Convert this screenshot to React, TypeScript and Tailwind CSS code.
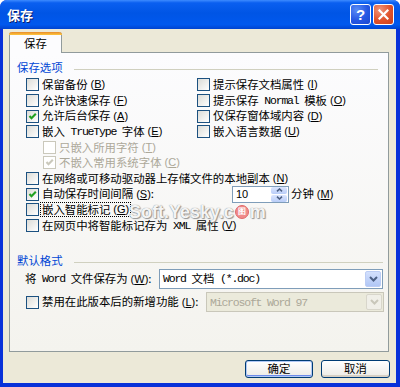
import React from 'react';

// Latin run inside SimSun-style text: narrow monospace
function Lt({ children }: { children: React.ReactNode }) {
  return (
    <span className="font-['Liberation_Mono',monospace] text-[11.5px] tracking-[-1.2px] whitespace-pre">
      {children}
    </span>
  );
}

// Mnemonic key, e.g. (B)
function K({ k }: { k: string }) {
  return (
    <span className="font-['Liberation_Sans',sans-serif] text-[11px] ml-[3px]">
      (<span className="underline underline-offset-1">{k}</span>)
    </span>
  );
}

function Box({ checked, disabled }: { checked?: boolean; disabled?: boolean }) {
  return (
    <span
      className={
        disabled
          ? 'w-[13px] h-[13px] shrink-0 border border-[#cac8bb] bg-white flex items-center justify-center'
          : 'w-[13px] h-[13px] shrink-0 border border-[#1c5180] bg-linear-to-br from-[#dcdcd7] to-white flex items-center justify-center'
      }
    >
      {checked && (
        <svg width="9" height="9" viewBox="0 0 9 9">
          <path d="M1.5 4 L3.5 6.2 L7.8 1.8" stroke={disabled ? '#cac8bb' : '#21a121'} strokeWidth="2.1" fill="none" />
        </svg>
      )}
    </span>
  );
}

function Row({
  children,
  checked,
  disabled,
  indent,
}: {
  children: React.ReactNode;
  checked?: boolean;
  disabled?: boolean;
  indent?: boolean;
}) {
  return (
    <div className={indent ? 'h-[15.6px] flex items-center gap-[3px] pl-[17px]' : 'h-[15.6px] flex items-center gap-[3px]'}>
      <Box checked={checked} disabled={disabled} />
      <span className={disabled ? 'flex items-center leading-none whitespace-nowrap text-[#aca899]' : 'flex items-center leading-none whitespace-nowrap'}>
        {children}
      </span>
    </div>
  );
}

function Header({ label, lineRight }: { label: string; lineRight: string }) {
  return (
    <div className="h-[14px] flex items-center">
      <span className="text-[#0046d5] leading-none whitespace-nowrap">{label}</span>
      <div className={`flex-1 h-px bg-[#d0d0bf] ml-[11px] mt-[3px] ${lineRight}`} />
    </div>
  );
}

function Chevron({ color }: { color: string }) {
  return (
    <svg width="9" height="6" viewBox="0 0 9 6">
      <path d="M1 1 L4.5 4.5 L8 1" stroke={color} strokeWidth="2" fill="none" />
    </svg>
  );
}

export default function App() {
  return (
    <div className="w-[400px] h-[387px] bg-white relative font-['Noto_Sans_CJK_SC',sans-serif] text-[11.4px] text-black">
      <div className="w-full h-full flex flex-col bg-[#0831d9] rounded-t-[7px] overflow-hidden">
        {/* Title bar */}
        <div className="h-[29px] shrink-0 flex items-center justify-between pl-[7px] pr-[6px] bg-[linear-gradient(180deg,#3d8bff_0%,#0a5ff0_10%,#0055e5_45%,#0058ee_85%,#0043cf_100%)]">
          <span className="text-white font-bold text-[13px] leading-none [text-shadow:1px_1px_0_#0a1e6a]">保存</span>
          <div className="flex gap-[2px]">
            <div className="w-[21px] h-[21px] rounded-[3px] border border-white bg-[radial-gradient(circle_at_30%_25%,#5a8cf5,#2557e3_55%,#1a47d0)] flex items-center justify-center">
              <span className="text-white font-bold text-[15px] leading-none font-['Liberation_Sans',sans-serif]">?</span>
            </div>
            <div className="w-[21px] h-[21px] rounded-[3px] border border-white bg-[radial-gradient(circle_at_30%_25%,#f0957a,#e0522b_55%,#c8401e)] flex items-center justify-center">
              <svg width="11" height="11" viewBox="0 0 11 11">
                <path d="M1.5 1.5 L9.5 9.5 M9.5 1.5 L1.5 9.5" stroke="white" strokeWidth="2.2" strokeLinecap="square" />
              </svg>
            </div>
          </div>
        </div>

        {/* Body */}
        <div className="flex-1 ml-[3px] mr-[4px] mb-[4px] bg-[#ece9d8] flex flex-col pl-[6px] pr-[7px] pt-[3px]">
          {/* Tab strip */}
          <div className="flex h-[20px]">
            <div className="relative z-10 w-[53px] h-[21px] bg-[#fcfcfe] border-x border-[#919b9c] rounded-t-[3px] flex items-center justify-center pt-[2px]">
              <div className="absolute left-[-1px] right-[-1px] top-0 h-[3px] rounded-t-[3px] bg-linear-to-b from-[#e68b2c] to-[#ffc73c]" />
              <span className="leading-none">保存</span>
            </div>
          </div>

          {/* Panel */}
          <div className="h-[300px] shrink-0 border border-[#919b9c] bg-linear-to-b from-[#fcfcfe] to-[#f4f3ee] flex flex-col pl-[7px] pt-[8px]">
            <Header label="保存选项" lineRight="mr-[10px]" />

            <div className="mt-[2.2px] ml-[9px] flex flex-col">
              <div className="flex">
                <div className="w-[171px] flex flex-col">
                  <Row>保留备份<K k="B" /></Row>
                  <Row>允许快速保存<K k="F" /></Row>
                  <Row checked>允许后台保存<K k="A" /></Row>
                  <Row>嵌入<Lt> TrueType </Lt>字体<K k="E" /></Row>
                  <Row indent disabled>只嵌入所用字符<K k="T" /></Row>
                  <Row indent disabled checked>不嵌入常用系统字体<K k="C" /></Row>
                </div>
                <div className="flex flex-col">
                  <Row>提示保存文档属性<K k="I" /></Row>
                  <Row>提示保存<Lt> Normal </Lt>模板<K k="O" /></Row>
                  <Row>仅保存窗体域内容<K k="D" /></Row>
                  <Row>嵌入语言数据<K k="U" /></Row>
                </div>
              </div>
              <Row>在网络或可移动驱动器上存储文件的本地副本<K k="N" /></Row>
              <div className="h-[15.6px] flex items-center gap-[3px]">
                <Box checked />
                <span className="w-[187px] flex items-center leading-none whitespace-nowrap">
                  自动保存时间间隔<K k="S" />:
                </span>
                <div className="w-[57px] h-[17px] shrink-0 border border-[#7f9db9] bg-white flex items-center justify-between pl-[3px] pr-px">
                  <span className="font-['Liberation_Sans',sans-serif] text-[11px] leading-none">10</span>
                  <div className="w-[16px] h-[15px] flex flex-col gap-px">
                    <div className="flex-1 rounded-[2px] bg-linear-to-b from-[#dbe5fd] to-[#b9cdf8] flex items-center justify-center">
                      <svg width="7" height="4" viewBox="0 0 7 4"><path d="M1 3.3 L3.5 1 L6 3.3" stroke="#4d6185" strokeWidth="1.6" fill="none" /></svg>
                    </div>
                    <div className="flex-1 rounded-[2px] bg-linear-to-b from-[#dbe5fd] to-[#b9cdf8] flex items-center justify-center">
                      <svg width="7" height="4" viewBox="0 0 7 4"><path d="M1 0.7 L3.5 3 L6 0.7" stroke="#4d6185" strokeWidth="1.6" fill="none" /></svg>
                    </div>
                  </div>
                </div>
                <span className="ml-[-1px] flex items-center leading-none whitespace-nowrap">
                  分钟<K k="M" />
                </span>
              </div>
              <div className="h-[15.6px] flex items-center gap-[2px]">
                <Box />
                <span className="flex items-center leading-none whitespace-nowrap outline-1 outline-dotted outline-black px-px py-[1px]">
                  嵌入智能标记<K k="G" />
                </span>
              </div>
              <Row>在网页中将智能标记存为<Lt> XML </Lt>属性<K k="V" /></Row>
            </div>

            <div className="mt-[21px]">
              <Header label="默认格式" lineRight="mr-[5px]" />
            </div>

            <div className="mt-px flex items-center h-[20px]">
              <span className="w-[134px] ml-[8px] flex items-center leading-none whitespace-nowrap">
                将<Lt> Word </Lt>文件保存为<K k="W" />:
              </span>
              <div className="w-[224px] h-[20px] border border-[#7f9db9] bg-white flex items-center justify-between pl-[3px] pr-px">
                <span className="flex items-center leading-none whitespace-nowrap">
                  <Lt>Word </Lt>文档<Lt> (*.doc)</Lt>
                </span>
                <div className="w-[16px] h-[16px] rounded-[2px] bg-linear-to-b from-[#d3e0fd] to-[#b1c7f6] border border-[#bccdf5] flex items-center justify-center">
                  <Chevron color="#4d6185" />
                </div>
              </div>
            </div>

            <div className="mt-[3px] flex items-center h-[20px]">
              <div className="ml-[9px] w-[180px] flex items-center gap-[3px]">
                <Box />
                <span className="flex items-center leading-none whitespace-nowrap">
                  禁用在此版本后的新增功能<K k="L" />:
                </span>
              </div>
              <div className="w-[178px] h-[20px] border border-[#c9c7ba] bg-[#ebeadb] flex items-center justify-between pl-[3px] pr-px">
                <span className="text-[#aca899] leading-none whitespace-nowrap">
                  <Lt>Microsoft Word 97</Lt>
                </span>
                <div className="w-[16px] h-[16px] rounded-[2px] border border-[#d8d6cb] bg-[#f0efe8] flex items-center justify-center">
                  <Chevron color="#c9c7ba" />
                </div>
              </div>
            </div>
          </div>

          {/* Buttons */}
          <div className="mt-[8px] flex justify-end gap-[8px] mr-[-1px]">
            <button className="w-[68px] h-[18px] rounded-[3px] border border-[#003c74] bg-linear-to-b from-white to-[#ecebe6] shadow-[inset_0_0_0_1px_#b0c8f5,inset_0_-1px_0_1px_#6d8bea] flex items-center justify-center leading-none">
              确定
            </button>
            <button className="w-[69px] h-[18px] rounded-[3px] border border-[#003c74] bg-linear-to-b from-white to-[#ecebe6] shadow-[inset_0_-2px_0_#d6d0c5] flex items-center justify-center leading-none">
              取消
            </button>
          </div>
        </div>
      </div>

      {/* Watermark */}
      <div className="absolute left-[129px] top-[205px] h-[14px] flex items-center font-['Liberation_Sans',sans-serif] font-bold text-[18px] leading-[14px] text-[#f4f4f4] [text-shadow:0_0_1px_#777,1px_1px_1px_#999] pointer-events-none">
        Soft.Yesky.c
        <span className="w-[14px] h-[14px] mx-px rounded-full bg-[#f08a8a] border border-[#e06a6a] flex items-center justify-center text-white text-[8px] leading-none [text-shadow:none]">图</span>
        m
      </div>
    </div>
  );
}
